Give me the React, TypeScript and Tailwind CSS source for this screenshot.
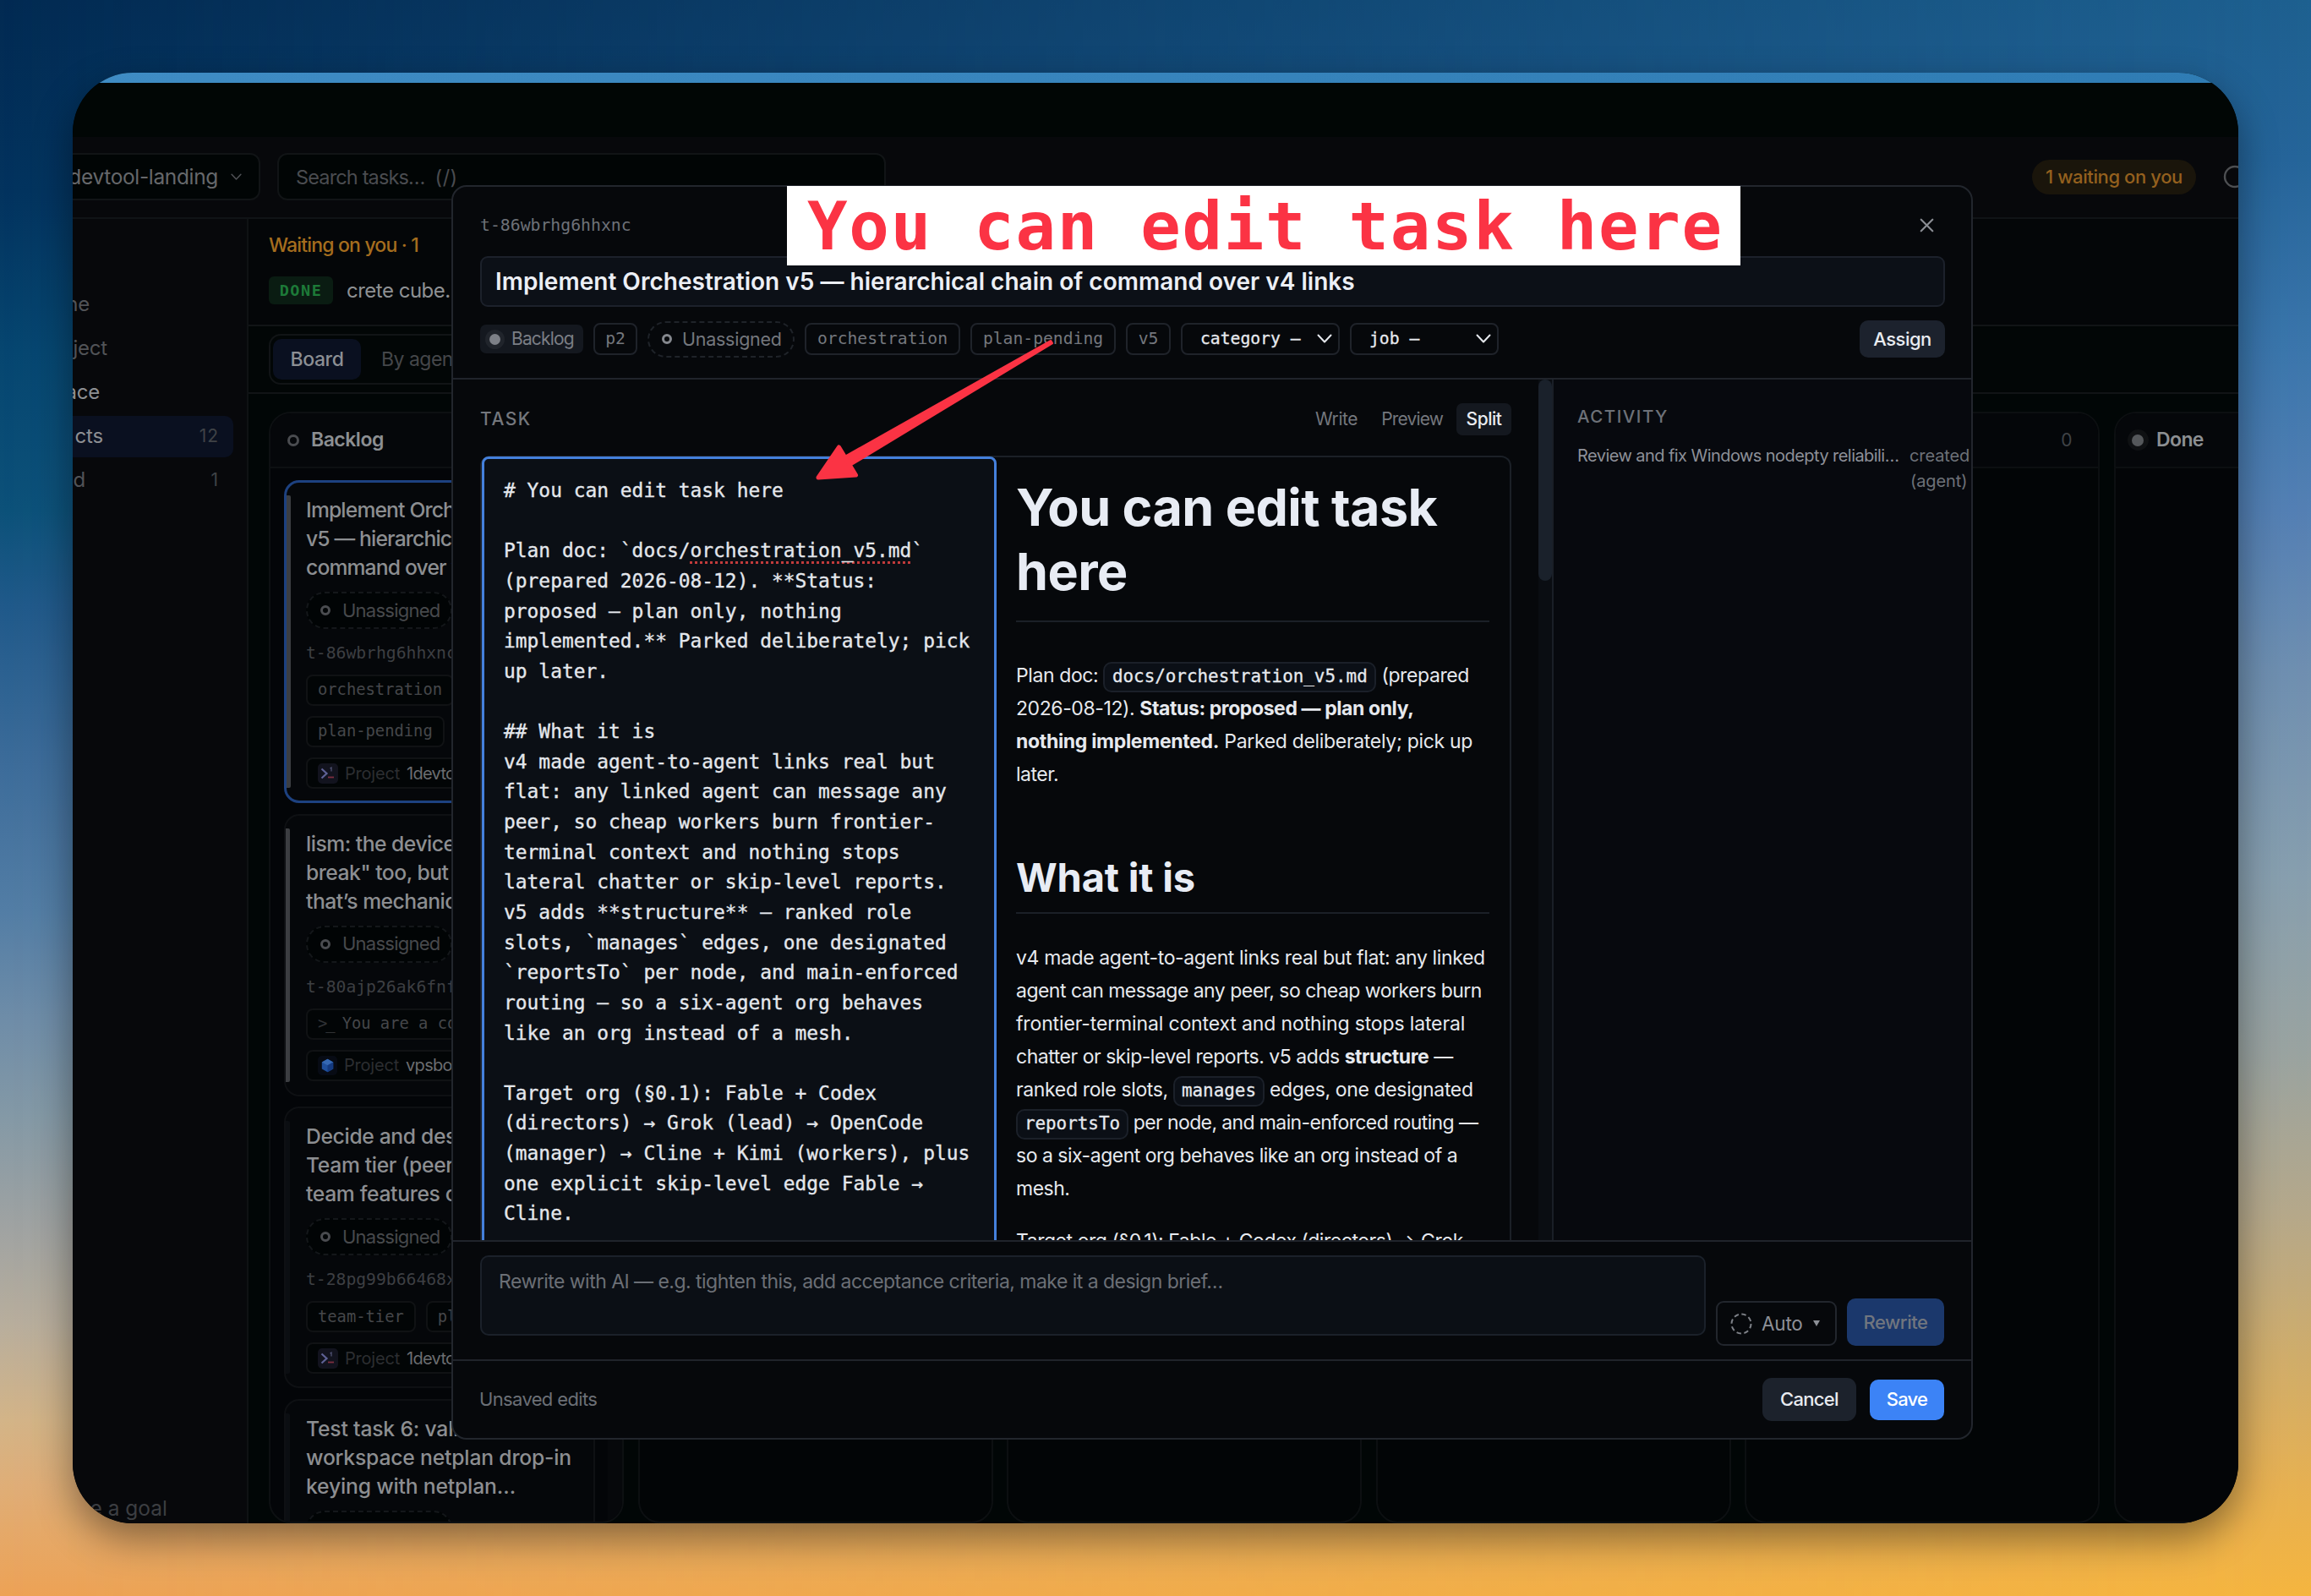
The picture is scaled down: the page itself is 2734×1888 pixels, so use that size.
import React from "react";
import { RotateCw, X } from "lucide-react";

const mono = "font-['DejaVu_Sans_Mono',monospace]";

function Caret({ className = "" }: { className?: string }) {
  return (
    <svg viewBox="0 0 18 12" className={`shrink-0 ${className}`} fill="none" stroke="currentColor" strokeWidth="2" strokeLinecap="round" strokeLinejoin="round">
      <path d="M1.500 1.500L9 9.500L16.500 1.500" />
    </svg>
  );
}

function Ring({ className = "" }: { className?: string }) {
  return <span className={`inline-block size-[12px] shrink-0 rounded-full border-3 ${className}`} />;
}

function SideItem({ end, label, count, active, bright }: { end: string; label: string; count?: string; active?: boolean; bright?: boolean }) {
  return (
    <div className="flex h-[52px] items-center">
      <div className={`flex h-[49px] w-[190px] items-center justify-between rounded-r-[10px] pr-[17px] ${active ? "bg-[#0a1020]" : ""}`}>
        <span className={`flex justify-end whitespace-nowrap text-[24px] tracking-[-0.200px] ${end} ${active || bright ? "text-[#8d8f93]" : "text-[#515357]"}`}>
          {label}
        </span>
        <span className="text-[21px] tracking-[1px] text-[#3f4246]">{count}</span>
      </div>
    </div>
  );
}

function ProjectIcon({ kind }: { kind: "term" | "cube" }) {
  if (kind === "cube") {
    return (
      <svg viewBox="0 0 24 24" className="size-[23px] shrink-0">
        <rect width="24" height="24" rx="5" fill="#070b14" />
        <path d="M12 4l7 3.800v8.400L12 20l-7-3.800V7.800z" fill="#1f4f9c" />
        <path d="M12 4l7 3.800-7 4-7-4z" fill="#3568b3" />
        <path d="M12 11.800l7-4v8.400L12 20z" fill="#143a80" />
      </svg>
    );
  }
  return (
    <svg viewBox="0 0 24 24" className="size-[24px] shrink-0" fill="none">
      <rect width="24" height="24" rx="5" fill="#12131e" />
      <path d="M4.500 6.500l6 5.500-6 5.500" stroke="#5f6296" strokeWidth="2.200" />
      <path d="M12 16.500h7" stroke="#7d2f3f" strokeWidth="1.800" />
      <path d="M14.500 6l1.500-1v4.500" stroke="#55587a" strokeWidth="1.200" />
    </svg>
  );
}

function Tag({ children, className = "" }: { children: React.ReactNode; className?: string }) {
  return (
    <span className={`flex h-[37px] items-center rounded-[8px] border-2 border-[#101214] bg-[#020506] px-[12px] whitespace-nowrap text-[#45474a] ${mono} text-[18.800px] ${className}`}>
      {children}
    </span>
  );
}

function Card({ title, id, tags, project, projectKind, height, active, bar, tracking }: {
  title: string[];
  id: string;
  tags: React.ReactNode;
  project: string;
  projectKind: "term" | "cube";
  height: string;
  active?: boolean;
  bar: string;
  tracking: string;
}) {
  return (
    <div className={`flex w-[368px] shrink-0 rounded-[18px] bg-[#05070a] ${height} ${active ? "border-3 border-[#1d4180]" : "border-2 border-[#0e1013]"}`}>
      <div className={`my-[15px] w-[5px] shrink-0 rounded-r-[2px] ${bar}`} />
      <div className={`flex min-w-0 flex-1 flex-col items-start overflow-hidden ${active ? "pt-[15px] pl-[18px]" : "pt-[16px] pl-[19px]"}`}>
        <div className={`text-[24.700px] leading-[34px] font-medium whitespace-nowrap text-[#8c8e91] ${tracking}`}>
          {title.map((t) => (
            <div key={t}>{t}</div>
          ))}
        </div>
        <div className="mt-[12px] flex h-[44px] w-[173px] shrink-0 items-center gap-[14px] rounded-full border-2 border-dashed border-[#14171a] bg-[#010405] pl-[15px] text-[22px] tracking-[-0.750px] text-[#47494c]">
          <Ring className="border-[#4a4c50]" />
          Unassigned
        </div>
        <div className={`mt-[13px] h-[32px] text-[19.700px] leading-[32px] text-[#3d3f43] ${mono}`}>{id}</div>
        <div className="mt-[9px] flex flex-wrap gap-[12px]">{tags}</div>
        <div className="mt-[12px] flex h-[37px] w-[310px] items-center rounded-[8px] border-2 border-[#101214] bg-[#020506] pl-[12px] text-[20px] tracking-[-0.700px] whitespace-nowrap text-[#2c2e31]">
          <ProjectIcon kind={projectKind} />
          <span className="ml-[8px] tracking-[-0.200px]">Project</span>
          <span className="ml-[8px] text-[#6b6d70]">{project}</span>
        </div>
      </div>
    </div>
  );
}

function EmptyColumn() {
  return (
    <div className="flex w-[420px] shrink-0 flex-col rounded-[26px] border-2 border-[#0c0f11] bg-[#020506]">
      <div className="flex h-[65px] items-center justify-end rounded-t-[24px] border-b-2 border-[#0c0f11] bg-[#040609] pr-[31px] text-[21px] text-[#3f4246]">0</div>
    </div>
  );
}

function Backdrop() {
  return (
    <div className="flex h-full flex-col bg-[#010606] text-[#55575b]">
      <div className="h-[12px] shrink-0 bg-[linear-gradient(90deg,#3f8cc4,#2f7cb4)]" />
      <div className="h-[64px] shrink-0 bg-[#010605]" />
      <div className="flex h-[97px] shrink-0 items-start border-b-2 border-[#101316] bg-[#07080b]">
        <div className="mt-[19px] flex h-[56px] w-[222px] items-center justify-end gap-[15px] rounded-r-[12px] border-2 border-l-0 border-[#111416] bg-[#010505] pr-[20px] text-[24.500px] tracking-[-0.350px] whitespace-nowrap text-[#66686b]">
          1devtool-landing
          <Caret className="h-[9px] w-[13px] text-[#505256]" />
        </div>
        <div className="mt-[19px] ml-[20px] flex h-[56px] w-[720px] items-center rounded-[12px] border-2 border-[#111416] bg-[#010505] pt-px pl-[20px] text-[23.500px] tracking-[-0.850px] text-[#4a4c50]">
          Search tasks… <span className="ml-[12px] tracking-[0.500px]">(/)</span>
        </div>
        <div className="mt-[27px] ml-auto flex h-[41px] w-[194px] items-center justify-center rounded-full bg-[#1a150b] text-[22px] font-medium tracking-[-0.400px] whitespace-nowrap text-[#94601e]">
          1 waiting on you
        </div>
        <div className="mt-[31px] ml-[30px] w-[20px] overflow-hidden">
          <RotateCw className="size-[32px] text-[#4d4f52]" strokeWidth={1.800} />
        </div>
      </div>

      <div className="flex min-h-0 flex-1">
        <div className="flex w-[208px] shrink-0 flex-col border-r-2 border-[#0f1214] bg-[#07080b] pt-[75px]">
          <SideItem end="w-[20px]" label="ne" />
          <SideItem end="w-[41px]" label="ject" />
          <SideItem end="w-[32px]" label="ace" bright />
          <SideItem end="w-[36px]" label="cts" count="12" active />
          <SideItem end="w-[15px]" label="d" count="1" />
          <div className="mt-auto flex h-[36px] w-[112px] items-center justify-end text-[24.500px] tracking-[0px] whitespace-nowrap text-[#3c3e42]">se a goal</div>
        </div>

        <div className="flex min-w-0 flex-1 flex-col">
          <div className="flex h-[127px] shrink-0 flex-col items-start border-b-2 border-[#111416] bg-[#040608] pt-[14px] pl-[24px]">
            <div className="h-[34px] text-[23px] leading-[34px] font-medium tracking-[-0.820px] whitespace-nowrap text-[#a56d1e]">Waiting on you · 1</div>
            <div className="mt-[20px] flex h-[33px] items-center gap-[16px]">
              <span className={`flex h-[33px] w-[76px] items-center justify-center rounded-[6px] bg-[#0a1c12] text-[18.500px] font-bold tracking-[1.500px] text-[#1d7a38] ${mono}`}>DONE</span>
              <span className="text-[24px] tracking-[-0.500px] whitespace-nowrap text-[#8e9093]">crete cube. built with care</span>
            </div>
          </div>
          <div className="flex h-[80px] shrink-0 items-start border-b-2 border-[#111416] bg-[#020606] pt-[9px] pl-[24px]">
            <div className="flex h-[60px] w-[520px] items-center rounded-[14px] border-2 border-[#111416] pl-[3px]">
              <span className="flex h-[48px] w-[104px] items-center justify-center rounded-[10px] bg-[#0a1020] text-[23px] font-medium tracking-[-0.400px] text-[#8c8f94]">Board</span>
              <span className="ml-[24px] text-[23px] tracking-[-0.500px] text-[#45474a]">By agent</span>
            </div>
          </div>

          <div className="flex min-h-0 flex-1 gap-[16.600px] overflow-hidden pt-[21px] pl-[24px]">
            <div className="flex w-[420px] shrink-0 flex-col overflow-hidden rounded-[26px] border-2 border-[#0d1012] bg-[#030508]">
              <div className="flex h-[65px] shrink-0 items-center gap-[14px] border-b-2 border-[#0d1012] bg-[#05070a] pl-[20px] text-[23px] font-semibold tracking-[-0.500px] text-[#8c8f92]">
                <Ring className="size-[14px] border-[#4a4c50]" />
                Backlog
              </div>
              <div className="flex min-h-0 flex-1 overflow-hidden">
                <div className="flex h-full flex-1 flex-col gap-[12.700px] pt-[14px] pl-[16px]">
                  <Card
                    height="h-[382px]"
                    active
                    bar="bg-[#3c3e42]"
                    tracking="tracking-[-0.850px]"
                    title={["Implement Orchestration", "v5 — hierarchical chain of", "command over v4 links"]}
                    id="t-86wbrhg6hhxnc"
                    tags={<><Tag>orchestration</Tag><Tag>plan-pending</Tag></>}
                    project="1devtool"
                    projectKind="term"
                  />
                  <Card
                    height="h-[334px]"
                    bar="bg-[#3c3e42]"
                    tracking="tracking-[-0.500px]"
                    title={["lism: the device can", "break\" too, but", "that’s mechanical"]}
                    id="t-80ajp26ak6fnf"
                    tags={<Tag><span className="mr-[10px] -tracking-[2px] text-[#303235]">&gt;_</span>You are a coding</Tag>}
                    project="vpsbox"
                    projectKind="cube"
                  />
                  <Card
                    height="h-[333px]"
                    bar="bg-[#0b0e12]"
                    tracking="tracking-[-0.350px]"
                    title={["Decide and design the", "Team tier (peer", "team features on"]}
                    id="t-28pg99b66468x"
                    tags={<><Tag>team-tier</Tag><Tag>plan</Tag></>}
                    project="1devtool"
                    projectKind="term"
                  />
                  <Card
                    height="h-[333px]"
                    bar="bg-[#0b0e12]"
                    tracking="tracking-[-0.180px]"
                    title={["Test task 6: validate", "workspace netplan drop-in", "keying with netplan…"]}
                    id="t-11"
                    tags={<Tag>netplan</Tag>}
                    project="vpsbox"
                    projectKind="cube"
                  />
                </div>
                <div className="w-[17px] bg-[#06080b]" />
              </div>
            </div>
            <EmptyColumn />
            <EmptyColumn />
            <EmptyColumn />
            <EmptyColumn />
            <div className="flex w-[420px] shrink-0 flex-col rounded-[26px] border-2 border-[#0c0f11] bg-[#030507]">
              <div className="flex h-[65px] items-center rounded-t-[24px] border-b-2 border-[#0c0f11] bg-[#05070a] pl-[14px] text-[23px] font-semibold tracking-[-0.600px] text-[#8c8f92]">
                <span className="mr-[9px] flex size-[25px] items-center justify-center rounded-full bg-[#0f1113]">
                  <span className="size-[14px] rounded-full bg-[#55585b]" />
                </span>
                Done
              </div>
            </div>
          </div>
        </div>
      </div>
    </div>
  );
}

function Chip({ children, className = "" }: { children: React.ReactNode; className?: string }) {
  return (
    <span className={`flex h-[38px] items-center justify-center rounded-[8px] border-2 border-[#1f232a] whitespace-nowrap text-[19.700px] ${mono} ${className}`}>
      {children}
    </span>
  );
}

function Code({ children, className }: { children: React.ReactNode; className: string }) {
  return (
    <span className={`inline-flex h-[36px] items-center justify-center rounded-[10px] border-2 border-[#1b2029] bg-[#0b0f16] align-middle text-[20.900px] tracking-normal [-webkit-text-stroke:0.300px] ${mono} ${className}`}>
      {children}
    </span>
  );
}

const sourceLines: React.ReactNode[] = [
  "# You can edit task here",
  "",
  <>Plan doc: `docs/<span className="underline decoration-[#c23b3b] decoration-dotted decoration-[3px] underline-offset-[5px]">orchestration_v5.md</span>`</>,
  "(prepared 2026-08-12). **Status:",
  "proposed — plan only, nothing",
  "implemented.** Parked deliberately; pick",
  "up later.",
  "",
  "## What it is",
  "v4 made agent-to-agent links real but",
  "flat: any linked agent can message any",
  "peer, so cheap workers burn frontier-",
  "terminal context and nothing stops",
  "lateral chatter or skip-level reports.",
  "v5 adds **structure** — ranked role",
  "slots, `manages` edges, one designated",
  "`reportsTo` per node, and main-enforced",
  "routing — so a six-agent org behaves",
  "like an org instead of a mesh.",
  "",
  "Target org (§0.1): Fable + Codex",
  "(directors) → Grok (lead) → OpenCode",
  "(manager) → Cline + Kimi (workers), plus",
  "one explicit skip-level edge Fable →",
  "Cline.",
];

function Line({ children, className = "" }: { children: React.ReactNode; className?: string }) {
  return <div className={`h-[39.140px] whitespace-nowrap ${className}`}>{children}</div>;
}

function Preview() {
  return (
    <div className="min-w-0 flex-1 pt-[21px] pr-[24px] pl-[23px] text-[23px] leading-[39.140px] text-[#e6e9ee]">
      <h1 className="border-b-2 border-[#1b2027] pb-[20px] text-[61px] leading-[76px] font-bold tracking-[-0.550px] text-[#e8ecf4]">
        You can edit task
        <br />
        here
      </h1>
      <div className="mt-[44px]">
        <Line className="tracking-[-0.400px]">Plan doc: <Code className="w-[323px]">docs/orchestration_v5.md</Code> (prepared</Line>
        <Line className="tracking-[-0.410px]">2026-08-12). <b className="font-bold">Status: proposed — plan only,</b></Line>
        <Line className="tracking-[-0.320px]"><b className="font-bold">nothing implemented.</b> Parked deliberately; pick up</Line>
        <Line className="tracking-[-0.500px]">later.</Line>
      </div>
      <h2 className="mt-[72px] border-b-2 border-[#1b2027] pb-[13px] text-[47px] leading-[57px] font-bold tracking-[-0.200px] text-[#e8ecf4]">What it is</h2>
      <div className="mt-[33px]">
        <Line className="tracking-[-0.370px]">v4 made agent-to-agent links real but flat: any linked</Line>
        <Line className="tracking-[-0.520px]">agent can message any peer, so cheap workers burn</Line>
        <Line className="tracking-[-0.140px]">frontier-terminal context and nothing stops lateral</Line>
        <Line className="tracking-[-0.470px]">chatter or skip-level reports. v5 adds <b className="font-bold">structure</b> —</Line>
        <Line className="tracking-[-0.360px]">ranked role slots, <Code className="w-[108px]">manages</Code> edges, one designated</Line>
        <Line className="tracking-[-0.620px]"><Code className="w-[133px]">reportsTo</Code> per node, and main-enforced routing —</Line>
        <Line className="tracking-[-0.490px]">so a six-agent org behaves like an org instead of a</Line>
        <Line className="tracking-[-0.500px]">mesh.</Line>
      </div>
      <Line className="mt-[22px] tracking-[-0.460px]">Target org (§0.1): Fable + Codex (directors) → Grok</Line>
    </div>
  );
}

function TaskDialog() {
  return (
    <div className="absolute top-[133px] left-[448px] flex h-[1484px] w-[1800px] flex-col overflow-hidden rounded-[18px] border-2 border-[#22262d] bg-[#06080b]">
      <div className="h-[228px] shrink-0 border-b-2 border-[#20242b] pr-[31px] pl-[32px]">
        <div className="flex h-[82px] items-center justify-between pt-[9px]">
          <span className={`text-[19.800px] text-[#6d7178] ${mono}`}>t-86wbrhg6hhxnc</span>
          <X className="mr-[8px] size-[27px] text-[#8a8d93]" strokeWidth={1.900} />
        </div>
        <div className="flex h-[60px] items-center rounded-[9px] border-2 border-[#1c212b] bg-[#0c1017] pl-[16px] text-[28px] font-semibold tracking-[0.020px] whitespace-nowrap text-[#eceff5]">
          Implement Orchestration v5 — hierarchical chain of command over v4 links
        </div>
        <div className="flex h-[76px] items-center gap-[12px]">
          <span className="flex h-[34px] w-[122px] items-center rounded-[7px] bg-[#14181f] pl-[6px] text-[21px] tracking-[-0.850px] text-[#7b7e85]">
            <span className="mr-[8px] flex size-[23px] items-center justify-center rounded-full bg-[#20242b]">
              <span className="size-[13px] rounded-full bg-[#7d8087]" />
            </span>
            Backlog
          </span>
          <Chip className="w-[52px] text-[#74777d]">p2</Chip>
          <span className="flex h-[43px] w-[174px] items-center gap-[12px] rounded-full border-2 border-dashed border-[#1f2329] pl-[15px] text-[21.500px] tracking-[-0.250px] text-[#74777d]">
            <Ring className="border-[#85888e]" />
            Unassigned
          </span>
          <Chip className="w-[184px] text-[#74777d]">orchestration</Chip>
          <Chip className="w-[172px] text-[#74777d]">plan-pending</Chip>
          <Chip className="w-[53px] text-[#74777d]">v5</Chip>
          <Chip className="w-[188px] justify-between! pr-[7px] pl-[21px] text-[#e6e9ee] [-webkit-text-stroke:0.300px]">
            category –
            <Caret className="h-[12px] w-[18px]" />
          </Chip>
          <Chip className="w-[176px] justify-between! pr-[7px] pl-[21px] text-[#e6e9ee] [-webkit-text-stroke:0.300px]">
            job –
            <Caret className="h-[12px] w-[18px]" />
          </Chip>
          <span className="ml-auto flex h-[44px] w-[101px] items-center justify-center rounded-[10px] bg-[#1c222d] text-[22px] font-medium tracking-[-0.500px] text-[#e8ebf0]">Assign</span>
        </div>
      </div>

      <div className="flex h-[1018px] shrink-0 overflow-hidden">
        <div className="flex w-[1284px] shrink-0 flex-col pr-[32px] pl-[32px]">
          <div className="flex h-[90px] shrink-0 items-center pt-[4px] text-[21px] text-[#74777d]">
            <span className="font-medium tracking-[1.500px]">TASK</span>
            <span className="ml-auto tracking-[-0.400px]">Write</span>
            <span className="ml-[28px] tracking-[-0.850px]">Preview</span>
            <span className="ml-[16px] flex h-[38px] w-[65px] items-center justify-center rounded-[7px] bg-[#14181f] font-medium tracking-[-0.500px] text-[#e8ebf0]">Split</span>
          </div>
          <div className="flex h-[1100px] shrink-0 rounded-t-[12px] border-2 border-[#1b2027]">
            <div className={`-mt-px h-full w-[609px] shrink-0 rounded-t-[8px] border-3 border-[#4480dc] bg-[#0b0f15] pt-[20px] pl-[23px] text-[22.900px] leading-[35.650px] whitespace-pre text-[#e4e7ec] [-webkit-text-stroke:0.350px] ${mono}`}>
              {sourceLines.map((l, i) => (
                <div key={i} className="h-[35.650px]">{l}</div>
              ))}
            </div>
            <Preview />
          </div>
        </div>
        <div className="w-[18px] shrink-0 border-r-2 border-[#1a1f27] bg-[#0a0d12]">
          <div className="h-[238px] w-[16px] rounded-[8px] bg-[#1a212b]" />
        </div>
        <div className="min-w-0 flex-1 bg-[#07090e] pt-[29px] pl-[28px]">
          <div className="h-[30px] text-[20.500px] leading-[30px] font-medium tracking-[1.500px] text-[#6d7178]">ACTIVITY</div>
          <div className="mt-[16px] flex leading-[30px] whitespace-nowrap">
            <span className="w-[393px] shrink-0 text-[20px] tracking-[-0.560px] text-[#8d9098]">Review and fix Windows nodepty reliabili…</span>
            <span className="text-[20px] tracking-[-0.100px] text-[#6d7178]">
              created
              <br />
              <span className="ml-px">(agent)</span>
            </span>
          </div>
        </div>
      </div>

      <div className="flex h-[141px] shrink-0 gap-[12px] border-t-2 border-[#20242b] pr-[31px] pl-[32px] pt-[16px]">
        <div className="h-[95px] w-[1450px] rounded-[10px] border-2 border-[#1b212a] bg-[#0b0f15] pt-[14px] pl-[20px] text-[23px] leading-[30px] tracking-[-0.530px] text-[#6b6f76]">
          Rewrite with AI — e.g. tighten this, add acceptance criteria, make it a design brief…
        </div>
        <div className="mt-[54px] flex h-[53px] w-[143px] items-center rounded-[9px] border-2 border-[#22262d] pl-[15px] text-[22.500px] text-[#8d9097]">
          <svg viewBox="0 0 26 26" className="mr-[11px] size-[26px] shrink-0" fill="none">
            <circle cx="13" cy="13" r="11.500" stroke="#7d8087" strokeWidth="2" strokeDasharray="5.500 3.530" />
          </svg>
          <span className="tracking-[-0.200px]">Auto</span>
          <span className="ml-[12px] size-0 border-x-[4px] border-t-[7px] border-x-transparent border-t-[#8d9097]" />
        </div>
        <div className="mt-[51px] flex h-[56px] w-[115px] items-center justify-center rounded-[10px] bg-[#1b386c] text-[22px] font-medium tracking-[-0.450px] text-[#71767f]">Rewrite</div>
      </div>

      <div className="flex flex-1 items-center border-t-2 border-[#20242b] pr-[32px] pl-[31px]">
        <span className="text-[22px] tracking-[-0.650px] text-[#6b6f76]">Unsaved edits</span>
        <span className="ml-auto flex h-[51px] w-[111px] items-center justify-center rounded-[11px] bg-[#1c222c] text-[22px] font-medium tracking-[-0.700px] text-[#e8ebf0]">Cancel</span>
        <span className="ml-[16px] flex h-[48px] w-[88px] items-center justify-center rounded-[10px] bg-[#3c83f6] text-[22px] font-medium tracking-[-0.800px] text-white">Save</span>
      </div>
    </div>
  );
}

export default function App() {
  return (
    <div className="relative h-[1888px] w-[2734px] overflow-hidden bg-[linear-gradient(180deg,#022a52_0%,#03335e_12%,#064670_22%,#0c5179_32%,#20598a_38%,#3d6c9a_48%,#527da5_57%,#6f8da8_64%,#8499a6_70%,#a0a3a2_77%,#b8ae9d_83%,#d3b488_89%,#dfae78_93%,#eda256_100%)] font-[Inter,sans-serif]">
      <div className="absolute inset-0 bg-[linear-gradient(180deg,#1d6090_0%,#25659a_10%,#3b76ac_22%,#5480b4_32%,#6f8fb0_42%,#889fae_55%,#9aa3a0_66%,#b5a88a_76%,#cfac6a_85%,#e6b052_93%,#f5b53f_100%)] [mask-image:linear-gradient(90deg,transparent,black)]" />
      <div className="relative pt-[86px] pl-[86px]">
        <div className="relative h-[1716px] w-[2562px] rounded-[71px] shadow-[0_18px_46px_rgba(0,0,0,0.42)]">
          <div className="relative h-full w-full overflow-hidden rounded-[71px]">
            <Backdrop />
            <TaskDialog />
            <div className={`absolute top-[134px] left-[845px] flex h-[94px] w-[1128px] items-center justify-center bg-white pt-[2px] pl-[4px] text-[79px] font-bold tracking-[1.700px] whitespace-nowrap text-[#fb3344] ${mono}`}>
              You can edit task here
            </div>
            <svg className="absolute top-[300px] left-[870px] h-[200px] w-[310px]" viewBox="956 386 310 200" fill="#fb3344" stroke="#fb3344" strokeLinejoin="round">
              <path d="M1243 403.500L1244.500 406L1008 549L1002 539Z" strokeWidth="3" />
              <path d="M968 565L992.500 529L1012.500 562Z" strokeWidth="5" />
            </svg>
          </div>
        </div>
      </div>
    </div>
  );
}
